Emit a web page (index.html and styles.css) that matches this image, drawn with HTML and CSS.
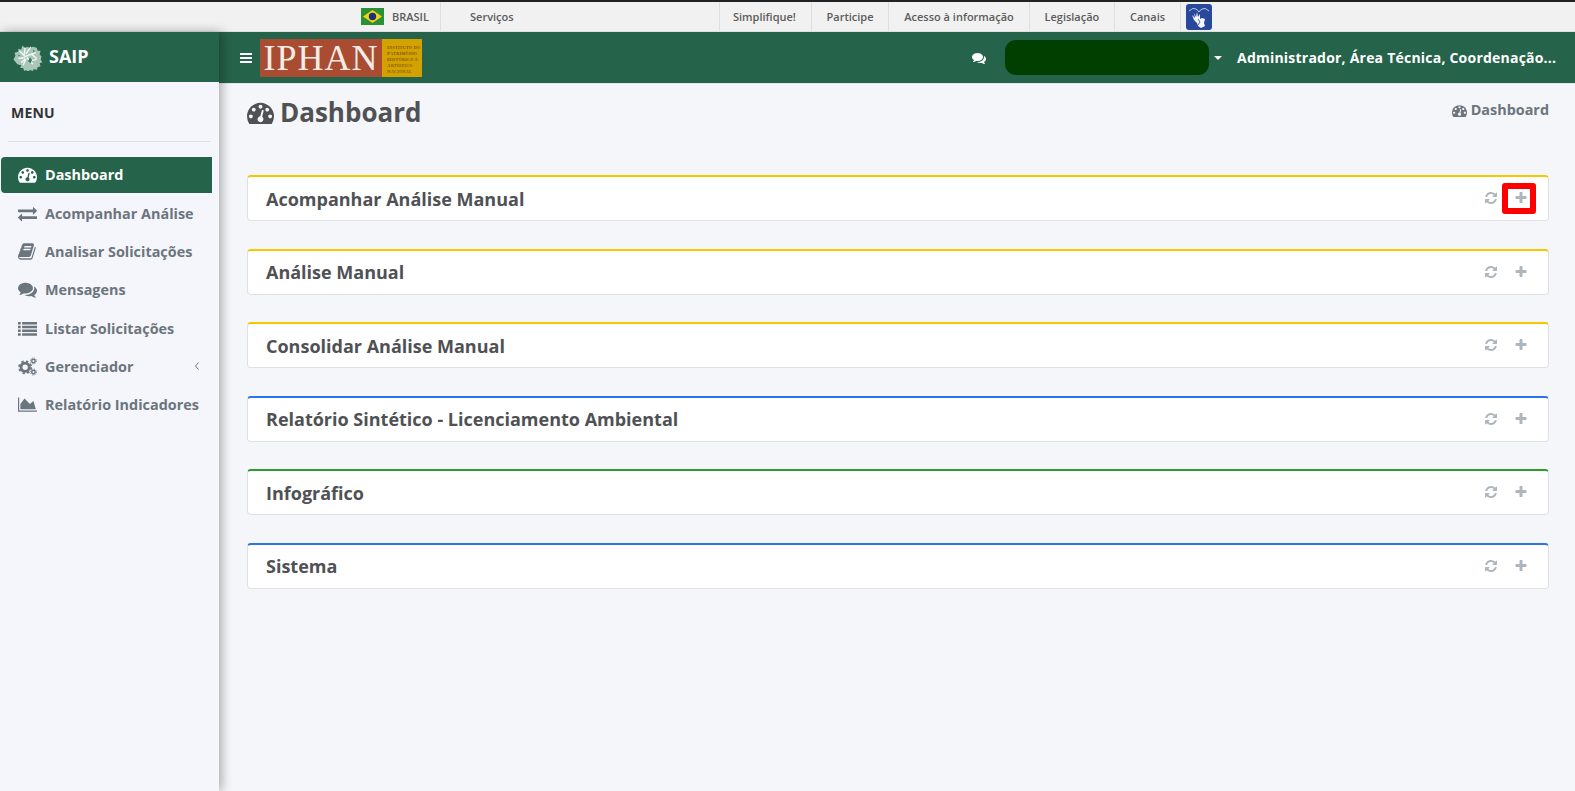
FILE: index.html
```html
<!DOCTYPE html>
<html lang="pt-BR">
<head>
<meta charset="utf-8">
<title>SAIP - Dashboard</title>
<link rel="stylesheet" href="styles.css">
</head>
<body>
<svg class="defs" aria-hidden="true">
  <symbol id="i-dash" viewBox="0 0 1792 1792"><path d="M384 1152q0-53-37.5-90.5t-90.5-37.5-90.5 37.5-37.5 90.5 37.5 90.5 90.5 37.5 90.5-37.5 37.5-90.5zm192-448q0-53-37.5-90.5t-90.5-37.5-90.5 37.5-37.5 90.5 37.5 90.5 90.5 37.5 90.5-37.5 37.5-90.5zm428 481l101-382q6-26-7.5-48.5t-38.5-29.5-48 7-30 39l-101 382q-60 5-107 43.5t-63 98.5q-20 77 20 146t117 89 146-20 89-117q16-60-6-117t-72-91zm660-33q0-53-37.5-90.5t-90.5-37.5-90.5 37.5-37.5 90.5 37.5 90.5 90.5 37.5 90.5-37.5 37.5-90.5zm-640-640q0-53-37.5-90.5t-90.5-37.5-90.5 37.5-37.5 90.5 37.5 90.5 90.5 37.5 90.5-37.5 37.5-90.5zm448 192q0-53-37.5-90.5t-90.5-37.5-90.5 37.5-37.5 90.5 37.5 90.5 90.5 37.5 90.5-37.5 37.5-90.5zm320 448q0 261-141 483-19 29-54 29h-1402q-35 0-54-29-141-221-141-483 0-182 71-348t191-286 286-191 348-71 348 71 286 191 191 286 71 348z"/></symbol>
  <symbol id="i-bars" viewBox="0 0 1792 1792"><path d="M1664 1344v128q0 26-19 45t-45 19h-1408q-26 0-45-19t-19-45v-128q0-26 19-45t45-19h1408q26 0 45 19t19 45zm0-512v128q0 26-19 45t-45 19h-1408q-26 0-45-19t-19-45v-128q0-26 19-45t45-19h1408q26 0 45 19t19 45zm0-512v128q0 26-19 45t-45 19h-1408q-26 0-45-19t-19-45v-128q0-26 19-45t45-19h1408q26 0 45 19t19 45z"/></symbol>
  <symbol id="i-exchange" viewBox="0 0 1792 1792"><path d="M1792 1184v192q0 13-9.5 22.5t-22.5 9.5h-1376v192q0 13-9.5 22.5t-22.5 9.5q-12 0-24-10l-319-320q-9-9-9-22 0-14 9-23l320-320q9-9 23-9 13 0 22.5 9.5t9.5 22.5v192h1376q13 0 22.5 9.5t9.5 22.5zm0-544q0 14-9 23l-320 320q-9 9-23 9-13 0-22.5-9.5t-9.5-22.5v-192h-1376q-13 0-22.5-9.5t-9.5-22.5v-192q0-13 9.5-22.5t22.5-9.5h1376v-192q0-14 9-23t23-9q12 0 24 10l319 319q9 9 9 23z"/></symbol>
  <symbol id="i-comments" viewBox="0 0 1792 1792"><path d="M1408 768q0 139-94 257t-256.5 186.5-353.5 68.5q-86 0-176-16-124 88-278 128-36 9-86 16h-3q-11 0-20.5-8t-11.5-21q-1-3-1-6.5t.5-6.5 2-6l2.5-5 3.5-5.5 4-5 4.5-5 4-4.5q5-6 23-25t26-29.5 22.5-29 25-38.5 20.5-44q-124-72-195-177t-71-224q0-139 94-257t256.5-186.5 353.5-68.5 353.5 68.5 256.5 186.5 94 257zm384 256q0 120-71 224.5t-195 176.5q10 24 20.5 44t25 38.5 22.5 29 26 29.5 23 25q1 1 4 4.5t4.5 5 4 5 3.5 5.5l2.5 5 2 6 .5 6.5-1 6.5q-3 14-13 22t-22 7q-50-7-86-16-154-40-278-128-90 16-176 16-271 0-472-132 58 4 88 4 161 0 309-45t264-129q125-92 192-212t67-254q0-77-23-152 129 71 204 178t75 230z"/></symbol>
  <symbol id="i-book" viewBox="0 0 1792 1792"><path d="M1639 478q40 57 18 129l-275 906q-19 64-76.5 107.5t-122.5 43.5h-923q-77 0-148.5-53.5t-99.5-131.5q-24-67-2-127 0-4 3-27t4-37q1-8-3-21.5t-3-19.5q2-11 8-21t16.5-23.5 16.5-23.5q23-38 45-91.5t30-91.5q3-10 .5-30t-.5-28q3-11 17-28t17-23q21-36 42-92t25-90q1-9-2.5-32t.5-28q4-13 22-30.5t22-22.5q19-26 42.5-84.5t27.5-96.5q1-8-3-25.5t-2-26.5q2-8 9-18t18-23 17-21q8-12 16.5-30.5t15-35 16-36 19.5-32 26.5-23.5 36-11.5 47.5 5.5l-1 3q38-9 51-9h761q74 0 114 56t18 130l-274 906q-36 119-71.5 153.5t-128.5 34.5h-869q-27 0-38 15-11 16-1 43 24 70 144 70h923q29 0 56-15.5t35-41.5l300-987q7-22 5-57 38 15 59 43zm-1064 2q-4 13 2 22.5t20 9.5h608q13 0 25.5-9.5t16.5-22.5l21-64q4-13-2-22.5t-20-9.5h-608q-13 0-25.5 9.5t-16.5 22.5zm-83 256q-4 13 2 22.5t20 9.5h608q13 0 25.5-9.5t16.5-22.5l21-64q4-13-2-22.5t-20-9.5h-608q-13 0-25.5 9.5t-16.5 22.5z"/></symbol>
  <symbol id="i-list" viewBox="0 0 1792 1792"><path d="M0 288h256v224h-256zM384 288h1408v224h-1408zM0 640h256v224h-256zM384 640h1408v224h-1408zM0 992h256v224h-256zM384 992h1408v224h-1408zM0 1344h256v224h-256zM384 1344h1408v224h-1408z"/></symbol>
  <symbol id="i-cogs" viewBox="0 0 24 24"><circle cx="9" cy="13" r="5.2" fill="none" stroke="currentColor" stroke-width="3.6"/><circle cx="9" cy="13" r="7.6" fill="none" stroke="currentColor" stroke-width="2.4" stroke-dasharray="3 3"/><circle cx="19.5" cy="5" r="2.2" fill="none" stroke="currentColor" stroke-width="1.8"/><circle cx="19.5" cy="5" r="3.8" fill="none" stroke="currentColor" stroke-width="1.2" stroke-dasharray="1.5 1.5"/><circle cx="19.5" cy="19" r="2.2" fill="none" stroke="currentColor" stroke-width="1.8"/><circle cx="19.5" cy="19" r="3.8" fill="none" stroke="currentColor" stroke-width="1.2" stroke-dasharray="1.5 1.5"/></symbol>
  <symbol id="i-area" viewBox="0 0 2048 1792"><path d="M2048 1536v128h-2048v-1536h128v1408h1920zm-384-1024l256 896h-1664v-576l448-576 576 576z"/></symbol>
  <symbol id="i-refresh" viewBox="0 0 1792 1792"><path d="M1639 1056q0 5-1 7-64 268-268 434.5t-478 166.5q-146 0-282.5-55t-243.5-157l-129 129q-19 19-45 19t-45-19-19-45v-448q0-26 19-45t45-19h448q26 0 45 19t19 45-19 45l-137 137q71 66 161 102t187 36q134 0 250-65t186-179q11-17 53-117 8-23 30-23h192q13 0 22.5 9.5t9.5 22.5zm25-800v448q0 26-19 45t-45 19h-448q-26 0-45-19t-19-45 19-45l138-138q-148-137-349-137-134 0-250 65t-186 179q-11 17-53 117-8 23-30 23h-199q-13 0-22.5-9.5t-9.5-22.5v-7q65-268 270-434.5t480-166.5q146 0 284 55.5t245 156.5l130-129q19-19 45-19t45 19 19 45z"/></symbol>
  <symbol id="i-plus" viewBox="0 0 1792 1792"><path d="M1600 736v192q0 40-28 68t-68 28h-416v416q0 40-28 68t-68 28h-192q-40 0-68-28t-28-68v-416h-416q-40 0-68-28t-28-68v-192q0-40 28-68t68-28h416v-416q0-40 28-68t68-28h192q40 0 68 28t28 68v416h416q40 0 68 28t28 68z"/></symbol>
</svg>

<header class="gov-bar">
  <span class="gov-brand">
    <svg class="flag" viewBox="0 0 23 17"><rect width="23" height="17" fill="#2a9236"/><polygon points="11.5,2 21,8.5 11.5,15 2,8.5" fill="#f3d312"/><circle cx="11.5" cy="8.5" r="3.7" fill="#1f2f80"/></svg>
    BRASIL
  </span>
  <a class="gov-link gov-services">Serviços</a>
  <a class="gov-link gov-first">Simplifique!</a>
  <a class="gov-link">Participe</a>
  <a class="gov-link">Acesso à informação</a>
  <a class="gov-link">Legislação</a>
  <a class="gov-link">Canais</a>
  <svg class="hands" viewBox="0 0 26 26"><rect width="26" height="26" rx="3" fill="#27489b"/><path d="M3 7q4-4 7-2 3 2 3 3 0-1 3-3 3-2 7 2" fill="none" stroke="#c9d3ea" stroke-width=".9"/><path d="M6 11l3 3-1-5 2 4 1-5 1 5 2-3v5l2-1 3 1-1 4 1 3-4 2-3-2-1-3-3-3z" fill="#f4f6fb"/><path d="M12 15l2 3-2 3" fill="none" stroke="#27489b" stroke-width=".8"/></svg>
</header>

<div class="shell">
  <aside class="sidebar">
    <div class="brand">
      <svg class="leaf" viewBox="0 0 30 30"><path d="M0 18l2-4-1-3 4-1 0-3 3 1 1-4 3 2 3-1 2 2 3-2 4 1 1 3 3 0-1 4 2 2-1 3 2 3-3 1 1 3-3 1-1 3-3-1-1 2-3-1-2 2-2-2-2 1-1-3-3 0 1-3-4-1z" fill="#a9c6b8"/><path d="M6 9l5 5 1-8M13 12l5-7M12 15l11-4M12 16l-7 1M13 17l-3 7M14 16l6 7M18 12l6 5M8 21l4-3M19 19l5-1" fill="none" stroke="#f1f7f3" stroke-width="1.5"/><path d="M15 20l2-4 2 2-1 4zM20 8l2 1-1 2zM5 13l2 1-2 1z" fill="#3f7a60"/></svg>
      <span class="brand-name">SAIP</span>
    </div>
    <div class="menu-label">MENU</div>
    <nav class="menu">
      <a class="menu-item active"><svg class="mi"><use href="#i-dash"/></svg>Dashboard</a>
      <a class="menu-item"><svg class="mi"><use href="#i-exchange"/></svg>Acompanhar Análise</a>
      <a class="menu-item"><svg class="mi"><use href="#i-book"/></svg>Analisar Solicitações</a>
      <a class="menu-item"><svg class="mi"><use href="#i-comments"/></svg>Mensagens</a>
      <a class="menu-item"><svg class="mi"><use href="#i-list"/></svg>Listar Solicitações</a>
      <a class="menu-item"><svg class="mi"><use href="#i-cogs"/></svg>Gerenciador<svg class="chev" viewBox="0 0 8 10"><polyline points="5.5,1.5 2.5,5 5.5,8.5" fill="none" stroke="currentColor" stroke-width="1"/></svg></a>
      <a class="menu-item"><svg class="mi"><use href="#i-area"/></svg>Relatório Indicadores</a>
    </nav>
  </aside>

  <div class="main">
    <div class="navbar">
      <svg class="burger"><use href="#i-bars"/></svg>
      <div class="iphan">
        <span class="iphan-name">IPHAN</span>
        <span class="iphan-sub">Instituto do<br>Patrimônio<br>Histórico e<br>Artístico<br>Nacional</span>
      </div>
      <svg class="chat"><use href="#i-comments"/></svg>
      <div class="redacted"></div>
      <span class="caret"></span>
      <span class="user">Administrador, Área Técnica, Coordenação...</span>
    </div>
    <main class="content">
      <div class="page-head">
        <h1 class="page-title"><svg class="title-icon"><use href="#i-dash"/></svg>Dashboard</h1>
        <span class="crumb"><svg class="crumb-icon"><use href="#i-dash"/></svg>Dashboard</span>
      </div>
      <section class="card yellow"><h2 class="card-title">Acompanhar Análise Manual</h2><div class="tools"><button class="tool"><svg><use href="#i-refresh"/></svg></button><button class="tool marked"><svg><use href="#i-plus"/></svg></button></div></section>
      <section class="card yellow"><h2 class="card-title">Análise Manual</h2><div class="tools"><button class="tool"><svg><use href="#i-refresh"/></svg></button><button class="tool"><svg><use href="#i-plus"/></svg></button></div></section>
      <section class="card yellow"><h2 class="card-title">Consolidar Análise Manual</h2><div class="tools"><button class="tool"><svg><use href="#i-refresh"/></svg></button><button class="tool"><svg><use href="#i-plus"/></svg></button></div></section>
      <section class="card blue"><h2 class="card-title">Relatório Sintético - Licenciamento Ambiental</h2><div class="tools"><button class="tool"><svg><use href="#i-refresh"/></svg></button><button class="tool"><svg><use href="#i-plus"/></svg></button></div></section>
      <section class="card green"><h2 class="card-title">Infográfico</h2><div class="tools"><button class="tool"><svg><use href="#i-refresh"/></svg></button><button class="tool"><svg><use href="#i-plus"/></svg></button></div></section>
      <section class="card blue"><h2 class="card-title">Sistema</h2><div class="tools"><button class="tool"><svg><use href="#i-refresh"/></svg></button><button class="tool"><svg><use href="#i-plus"/></svg></button></div></section>
    </main>
  </div>
</div>
</body>
</html>
```

FILE: styles.css
```css
* { box-sizing: border-box; }
html, body { margin: 0; height: 100%; overflow: hidden; }
body { font-family: "Open Sans", "Liberation Sans", sans-serif; background: #f4f6f9; color: #4f5154; }
.defs { display: none; }
svg { fill: currentColor; display: block; flex: none; }

.gov-bar { height: 32px; border-top: 2px solid #222; background: #f1f1f1; border-bottom: 1px solid #dfdfdf; display: flex; align-items: center; padding-left: 361px; font-size: 11px; font-weight: 600; color: #5c5c5c; }
.gov-brand { display: flex; align-items: center; gap: 8px; height: 100%; width: 80px; border-right: 1px solid #dfdfdf; }
.flag { width: 23px; height: 17px; }
.gov-link { display: flex; align-items: center; height: 100%; padding: 0 14.85px; border-right: 1px solid #dfdfdf; white-space: nowrap; }
.gov-services { width: 279px; padding-left: 29px; }
.gov-first { padding-left: 13px; }
.hands { width: 26px; height: 26px; margin-left: 5px; }

.shell { display: flex; height: 759px; }
.sidebar { width: 219px; flex: none; background: #f4f6fb; box-shadow: 3px 0 10px rgba(0, 0, 0, .3); position: relative; z-index: 2; }
.brand { height: 50px; background: #25634a; display: flex; align-items: center; padding: 0 0 2px 13px; gap: 6px; color: #fff; }
.leaf { width: 30px; height: 29px; }
.brand-name { font-size: 18px; font-weight: 700; }
.menu-label { margin: 0 8px; padding: 21px 3px 19px; height: 60px; font-size: 14px; font-weight: 700; letter-spacing: .2px; color: #333; border-bottom: 1px solid #dfe1e6; line-height: 20px; }
.menu { padding: 15px 7px 0 1px; display: flex; flex-direction: column; gap: 2.3px; }
.menu-item { height: 36px; display: flex; align-items: center; padding-left: 17px; border-radius: 4px 0 0 4px; font-size: 14.4px; font-weight: 700; color: #6c757d; }
.menu-item.active { background: #25634a; color: #fff; padding-bottom: 2px; }
.mi { width: 19px; height: 19px; margin-right: 8px; }
.chev { width: 8px; height: 10px; margin-left: auto; margin-right: 11px; }

.main { flex: 1; min-width: 0; display: flex; flex-direction: column; }
.navbar { height: 52px; background: #25634a; border-bottom: 1px solid #e4e6ec; display: flex; align-items: center; color: #fff; padding-left: 20px; }
.burger { width: 14px; height: 14px; }
.iphan { display: flex; height: 38px; width: 162px; margin-left: 7px; }
.iphan-name { width: 122px; background: #a94c32; color: #f3ece6; font-family: "Liberation Serif", serif; font-size: 36px; line-height: 38px; letter-spacing: 1px; text-align: center; overflow: hidden; }
.iphan-sub { width: 40px; background: #d4a200; color: #80560f; font-family: "Liberation Serif", serif; font-size: 5px; line-height: 6px; padding: 6px 0 0 5px; white-space: nowrap; font-weight: 700; font-variant: small-caps; letter-spacing: .3px; }
.chat { width: 14px; height: 14px; margin-left: 550px; }
.redacted { width: 204px; height: 35px; border-radius: 11px; background: #003f00; margin-left: 19px; }
.caret { margin-left: 5px; border: 4px solid transparent; border-top-color: #fff; border-bottom-width: 0; }
.user { font-size: 14px; font-weight: 700; margin-left: 15px; white-space: nowrap; letter-spacing: .22px; }

.content { padding: 0 26px 0 28px; }
.page-head { height: 91px; display: flex; justify-content: space-between; align-items: flex-start; padding-top: 9px; }
.page-title { margin: 0; font-size: 26px; font-weight: 700; line-height: 38px; display: flex; align-items: center; color: #4f5154; }
.title-icon { width: 27px; height: 27px; margin-right: 6px; }
.crumb { display: flex; align-items: center; font-size: 14.4px; font-weight: 700; color: #6c757d; line-height: 34px; }
.crumb-icon { width: 15px; height: 15px; margin-right: 4px; }

.card { height: 46.2px; margin-bottom: 27.35px; background: #fff; border: 1px solid #dfe1e4; border-top: 2px solid; border-radius: 4px; display: flex; align-items: center; justify-content: space-between; padding-left: 18px; }
.yellow { border-top-color: #f5c800; }
.blue { border-top-color: #2a73e8; }
.green { border-top-color: #2a9d2a; }
.card-title { margin: 0; font-size: 18px; font-weight: 700; color: #4f5154; }
.tools { display: flex; margin: 0 12px 1px 0; }
.tool { width: 30px; height: 22px; padding: 0; border: 0; background: none; color: #adb5bd; display: flex; align-items: center; justify-content: center; position: relative; }
.tool svg { width: 14px; height: 14px; }
.marked::after { content: ""; position: absolute; inset: -4px 0 -5px -4px; border: 6px solid #f00; border-radius: 3px; }
```
